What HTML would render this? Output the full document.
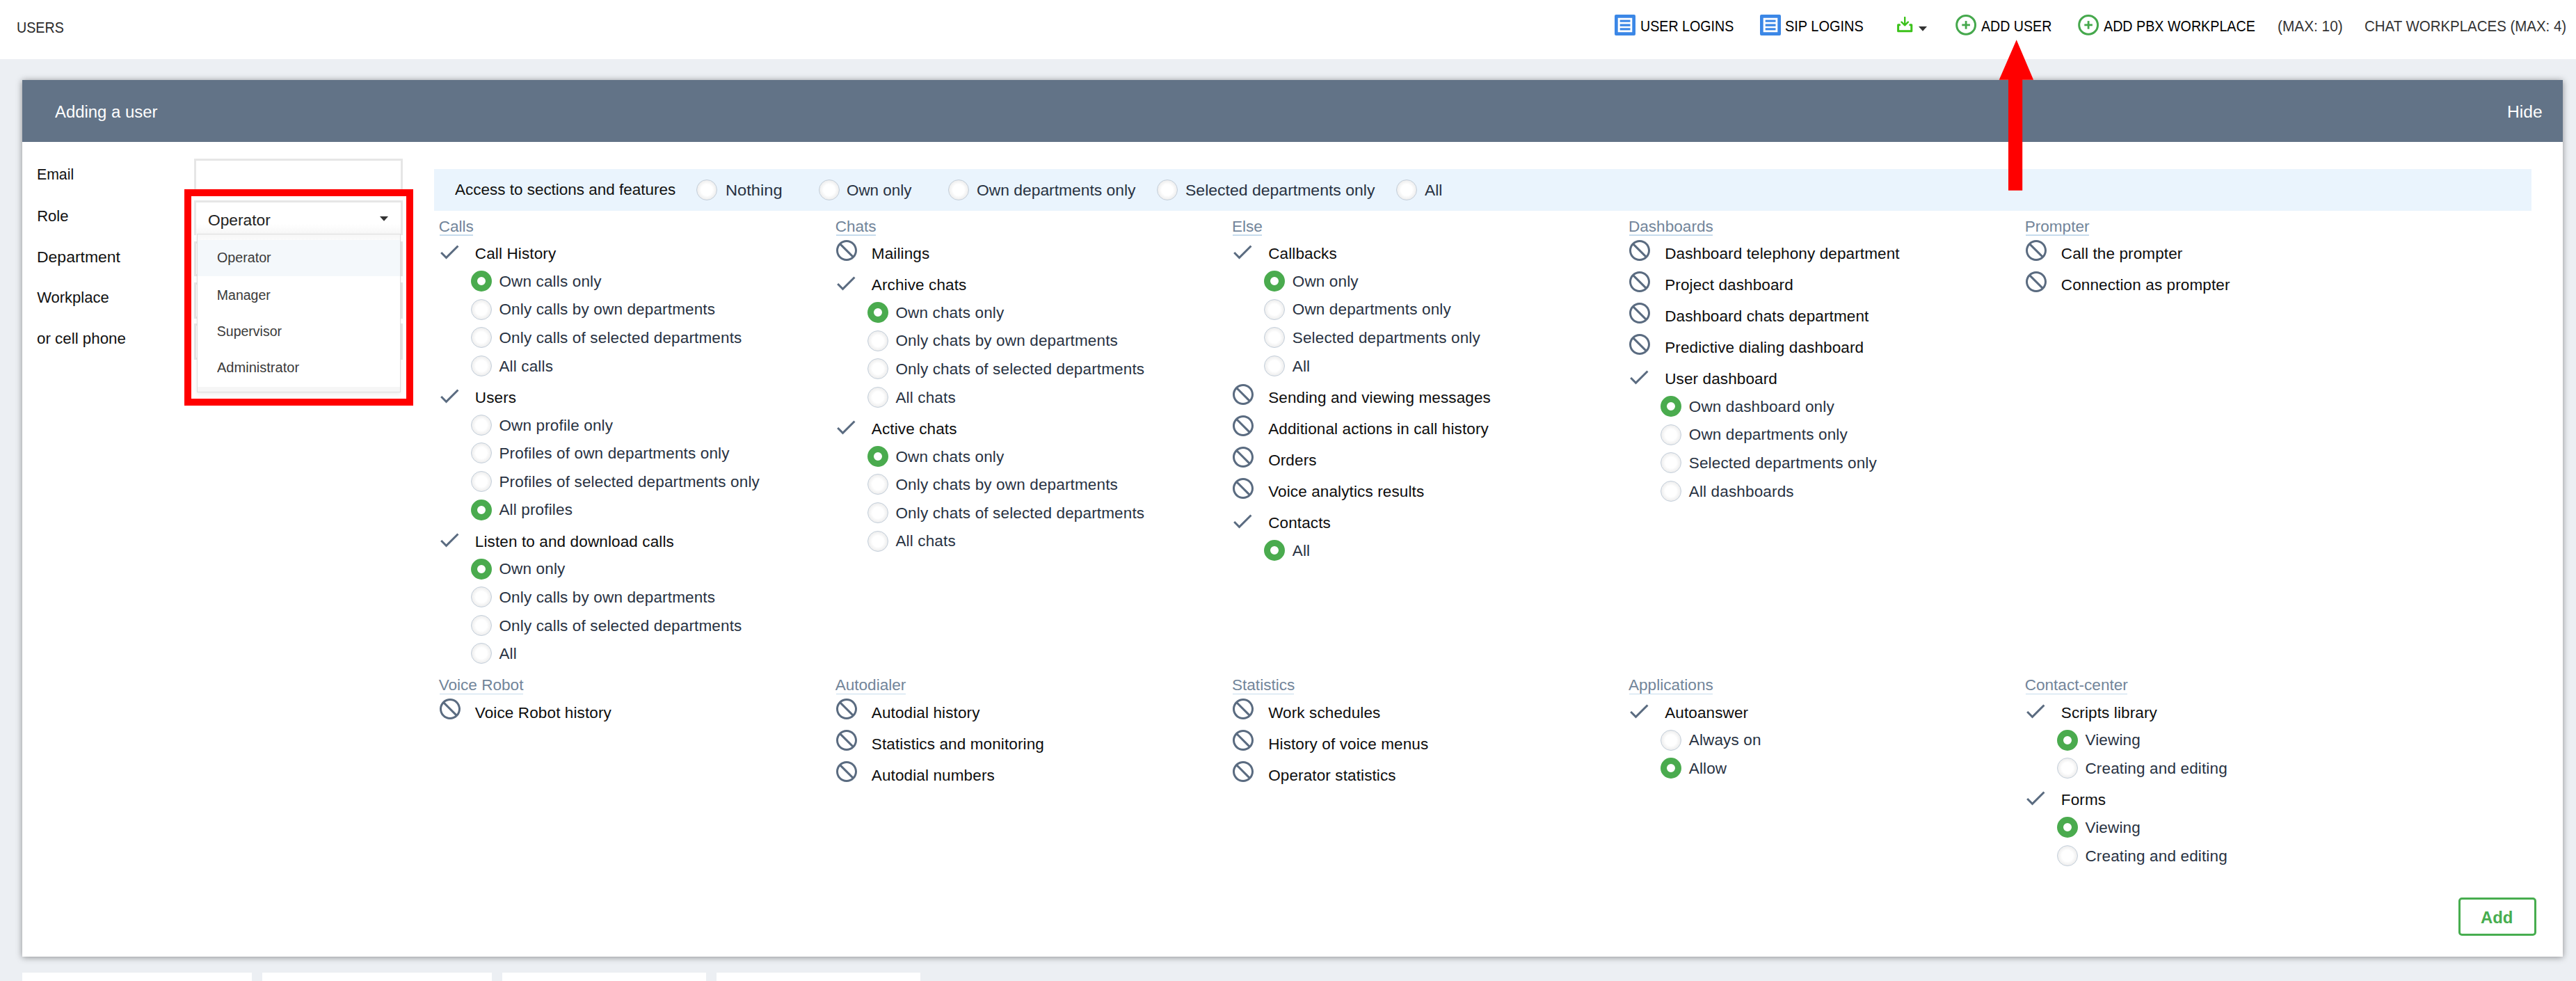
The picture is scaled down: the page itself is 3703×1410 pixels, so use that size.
<!DOCTYPE html><html><head><meta charset="utf-8"><title>Users</title><style>html,body{margin:0;padding:0;width:3703px;height:1410px;overflow:hidden;background:#eceff3;font-family:"Liberation Sans", sans-serif}.t{position:absolute;white-space:pre;transform-origin:0 0}</style></head><body>
<div style="position:absolute;left:0px;top:0px;width:3703px;height:85px;background:#fff"></div>
<div class="t" style="left:23.69px;top:28.80px;font-size:21.8px;line-height:21.8px;color:#2b2b2b;font-weight:400;transform:scaleX(0.9022);">USERS</div>
<svg style="position:absolute;left:2321px;top:21px" width="30" height="30" viewBox="0 0 30 30"><path fill-rule="evenodd" fill="#3b87e6" d="M2 0H28Q30 0 30 2V28Q30 30 28 30H2Q0 30 0 28V2Q0 0 2 0ZM4.7 4.7V25.3H25.3V4.7Z"/><rect x="7.7" y="7.6" width="14.8" height="3.1" fill="#3b87e6"/><rect x="7.7" y="13.5" width="14.8" height="3.3" fill="#3b87e6"/><rect x="7.7" y="19.3" width="14.8" height="3.1" fill="#3b87e6"/></svg>
<div class="t" style="left:2357.69px;top:26.80px;font-size:21.8px;line-height:21.8px;color:#000;font-weight:400;transform:scaleX(0.9012);">USER LOGINS</div>
<svg style="position:absolute;left:2530px;top:21px" width="30" height="30" viewBox="0 0 30 30"><path fill-rule="evenodd" fill="#3b87e6" d="M2 0H28Q30 0 30 2V28Q30 30 28 30H2Q0 30 0 28V2Q0 0 2 0ZM4.7 4.7V25.3H25.3V4.7Z"/><rect x="7.7" y="7.6" width="14.8" height="3.1" fill="#3b87e6"/><rect x="7.7" y="13.5" width="14.8" height="3.3" fill="#3b87e6"/><rect x="7.7" y="19.3" width="14.8" height="3.1" fill="#3b87e6"/></svg>
<div class="t" style="left:2566.09px;top:26.80px;font-size:21.8px;line-height:21.8px;color:#000;font-weight:400;transform:scaleX(0.9149);">SIP LOGINS</div>
<svg style="position:absolute;left:2726px;top:24px" width="24" height="23" viewBox="0 0 24 23"><path d="M4.6 11.7 H2.6 V20.8 H21.8 V11.7 H19.8" fill="none" stroke="#3cc21b" stroke-width="3" stroke-linejoin="round" stroke-linecap="round"/><path d="M12.2 1 V12.2 M7.5 7.7 L12.2 12.4 L16.9 7.7" fill="none" stroke="#3cc21b" stroke-width="2.4" stroke-linecap="round" stroke-linejoin="round"/></svg>
<svg style="position:absolute;left:2758px;top:37.5px" width="12" height="7" viewBox="0 0 12 7"><path d="M0 0 H12 L6 6.8 Z" fill="#333"/></svg>
<svg style="position:absolute;left:2811px;top:21px" width="30" height="30" viewBox="0 0 30 30"><circle cx="15.1" cy="14.9" r="13.4" fill="none" stroke="#45a84c" stroke-width="3"/><rect x="9.3" y="13.5" width="11.6" height="2.8" fill="#45a84c"/><rect x="13.7" y="9.1" width="2.8" height="11.6" fill="#45a84c"/></svg>
<div class="t" style="left:2847.69px;top:26.80px;font-size:21.8px;line-height:21.8px;color:#000;font-weight:400;transform:scaleX(0.8999);">ADD USER</div>
<svg style="position:absolute;left:2987px;top:21px" width="30" height="30" viewBox="0 0 30 30"><circle cx="15.1" cy="14.9" r="13.4" fill="none" stroke="#45a84c" stroke-width="3"/><rect x="9.3" y="13.5" width="11.6" height="2.8" fill="#45a84c"/><rect x="13.7" y="9.1" width="2.8" height="11.6" fill="#45a84c"/></svg>
<div class="t" style="left:3024.29px;top:26.80px;font-size:21.8px;line-height:21.8px;color:#000;font-weight:400;transform:scaleX(0.9039);">ADD PBX WORKPLACE</div>
<div class="t" style="left:3274.29px;top:26.80px;font-size:21.8px;line-height:21.8px;color:#333;font-weight:400;transform:scaleX(0.9549);">(MAX: 10)</div>
<div class="t" style="left:3398.69px;top:26.80px;font-size:21.8px;line-height:21.8px;color:#333;font-weight:400;transform:scaleX(0.9382);">CHAT WORKPLACES (MAX: 4)</div>
<div style="position:absolute;left:32px;top:115px;width:3652px;height:1260px;background:#fff;box-shadow:0 1px 9px rgba(0,0,0,0.42)"></div>
<div style="position:absolute;left:32px;top:115px;width:3652px;height:89px;background:#627387"></div>
<div class="t" style="left:78.62px;top:149.90px;font-size:23px;line-height:23px;color:#fff;font-weight:400;transform:scaleX(1.0384);">Adding a user</div>
<div class="t" style="left:3603.62px;top:149.70px;font-size:23px;line-height:23px;color:#fff;font-weight:400;transform:scaleX(1.0708);">Hide</div>
<div style="position:absolute;left:32px;top:1398px;width:330px;height:12px;background:#fff"></div>
<div style="position:absolute;left:377px;top:1398px;width:330px;height:12px;background:#fff"></div>
<div style="position:absolute;left:722px;top:1398px;width:293px;height:12px;background:#fff"></div>
<div style="position:absolute;left:1030px;top:1398px;width:293px;height:12px;background:#fff"></div>
<div class="t" style="left:53.18px;top:239.93px;font-size:22px;line-height:22px;color:#111;font-weight:400;transform:scaleX(0.9656);">Email</div>
<div class="t" style="left:53.18px;top:299.63px;font-size:22px;line-height:22px;color:#111;font-weight:400;">Role</div>
<div class="t" style="left:53.18px;top:359.23px;font-size:22px;line-height:22px;color:#111;font-weight:400;transform:scaleX(1.0439);">Department</div>
<div class="t" style="left:53.18px;top:417.33px;font-size:22px;line-height:22px;color:#111;font-weight:400;">Workplace</div>
<div class="t" style="left:53.18px;top:476.33px;font-size:22px;line-height:22px;color:#111;font-weight:400;transform:scaleX(1.0155);">or cell phone</div>
<div style="position:absolute;left:279px;top:228px;width:300px;height:50px;border:3px solid #e6e6e6;box-sizing:border-box;background:#fff"></div>
<div style="position:absolute;left:279px;top:347px;width:300px;height:50px;border:3px solid #e6e6e6;box-sizing:border-box;background:#fff"></div>
<div style="position:absolute;left:279px;top:406px;width:300px;height:52px;border:3px solid #e6e6e6;box-sizing:border-box;background:#fff"></div>
<div style="position:absolute;left:279px;top:465px;width:300px;height:52px;border:3px solid #e6e6e6;box-sizing:border-box;background:#fff"></div>
<div style="position:absolute;left:279px;top:288px;width:300px;height:50px;border:3px solid #e6e6e6;border-bottom:none;box-sizing:border-box;background:#fff"></div>
<div style="position:absolute;left:282px;top:322px;width:294px;height:15px;background:linear-gradient(#fff,#f6f6f6)"></div>
<div class="t" style="left:299.17px;top:305.56px;font-size:22.2px;line-height:22.2px;color:#222;font-weight:400;transform:scaleX(1.0253);">Operator</div>
<svg style="position:absolute;left:546px;top:310.5px" width="12" height="7" viewBox="0 0 12 7"><path d="M0 0 H12 L6 6.8 Z" fill="#333"/></svg>
<div style="position:absolute;left:282.5px;top:336px;width:293.5px;height:228px;background:#fff;border:1px solid #dedede;box-sizing:border-box;box-shadow:0 3px 6px rgba(0,0,0,0.07)"></div>
<div style="position:absolute;left:283.5px;top:556px;width:291.5px;height:7px;background:#f6f6f6"></div>
<div style="position:absolute;left:283.5px;top:337px;width:291.5px;height:8px;background:linear-gradient(#f6f6f6,#fbfbfb)"></div>
<div style="position:absolute;left:283.5px;top:345px;width:291.5px;height:52px;background:#f4f8fb"></div>
<div class="t" style="left:311.83px;top:361.41px;font-size:19.5px;line-height:19.5px;color:#3a3a3a;font-weight:400;transform:scaleX(1.0093);">Operator</div>
<div class="t" style="left:311.83px;top:414.81px;font-size:19.5px;line-height:19.5px;color:#3a3a3a;font-weight:400;">Manager</div>
<div class="t" style="left:311.83px;top:466.61px;font-size:19.5px;line-height:19.5px;color:#3a3a3a;font-weight:400;">Supervisor</div>
<div class="t" style="left:311.83px;top:518.81px;font-size:19.5px;line-height:19.5px;color:#3a3a3a;font-weight:400;transform:scaleX(1.0281);">Administrator</div>
<div style="position:absolute;left:265px;top:272px;width:329px;height:311px;border:10px solid #ff0000;box-sizing:border-box"></div>
<div style="position:absolute;left:624px;top:243px;width:3015px;height:60px;background:#eaf4fd"></div>
<div class="t" style="left:653.65px;top:261.81px;font-size:22.5px;line-height:22.5px;color:#111;font-weight:400;transform:scaleX(0.9987);">Access to sections and features</div>
<svg style="position:absolute;left:1001.2px;top:258.2px" width="30" height="30" viewBox="0 0 30 30"><defs><radialGradient id="rg" cx="50%" cy="50%" r="50%"><stop offset="0.55" stop-color="#fff"/><stop offset="1" stop-color="#ececec"/></radialGradient></defs><circle cx="15" cy="15" r="14.5" fill="url(#rg)" stroke="#c3ceda" stroke-width="1"/></svg>
<div class="t" style="left:1042.65px;top:263.11px;font-size:22.5px;line-height:22.5px;color:#283242;font-weight:400;transform:scaleX(1.0516);">Nothing</div>
<svg style="position:absolute;left:1177.4px;top:258.2px" width="30" height="30" viewBox="0 0 30 30"><defs><radialGradient id="rg" cx="50%" cy="50%" r="50%"><stop offset="0.55" stop-color="#fff"/><stop offset="1" stop-color="#ececec"/></radialGradient></defs><circle cx="15" cy="15" r="14.5" fill="url(#rg)" stroke="#c3ceda" stroke-width="1"/></svg>
<div class="t" style="left:1217.35px;top:263.11px;font-size:22.5px;line-height:22.5px;color:#283242;font-weight:400;transform:scaleX(0.9962);">Own only</div>
<svg style="position:absolute;left:1363.2px;top:258.2px" width="30" height="30" viewBox="0 0 30 30"><defs><radialGradient id="rg" cx="50%" cy="50%" r="50%"><stop offset="0.55" stop-color="#fff"/><stop offset="1" stop-color="#ececec"/></radialGradient></defs><circle cx="15" cy="15" r="14.5" fill="url(#rg)" stroke="#c3ceda" stroke-width="1"/></svg>
<div class="t" style="left:1404.25px;top:263.11px;font-size:22.5px;line-height:22.5px;color:#283242;font-weight:400;transform:scaleX(1.0149);">Own departments only</div>
<svg style="position:absolute;left:1663.2px;top:258.2px" width="30" height="30" viewBox="0 0 30 30"><defs><radialGradient id="rg" cx="50%" cy="50%" r="50%"><stop offset="0.55" stop-color="#fff"/><stop offset="1" stop-color="#ececec"/></radialGradient></defs><circle cx="15" cy="15" r="14.5" fill="url(#rg)" stroke="#c3ceda" stroke-width="1"/></svg>
<div class="t" style="left:1704.15px;top:263.11px;font-size:22.5px;line-height:22.5px;color:#283242;font-weight:400;transform:scaleX(1.0228);">Selected departments only</div>
<svg style="position:absolute;left:2007px;top:258.2px" width="30" height="30" viewBox="0 0 30 30"><defs><radialGradient id="rg" cx="50%" cy="50%" r="50%"><stop offset="0.55" stop-color="#fff"/><stop offset="1" stop-color="#ececec"/></radialGradient></defs><circle cx="15" cy="15" r="14.5" fill="url(#rg)" stroke="#c3ceda" stroke-width="1"/></svg>
<div class="t" style="left:2048.05px;top:263.11px;font-size:22.5px;line-height:22.5px;color:#283242;font-weight:400;transform:scaleX(1.0103);">All</div>
<div class="t" style="left:630.64px;top:314.93px;font-size:22.6px;line-height:22.6px;color:#72859a;font-weight:400;">Calls</div><div style="position:absolute;left:632.0px;top:337.3px;width:48.0px;height:1.3px;background:#c6dbec"></div>
<svg style="position:absolute;left:628px;top:344px" width="36" height="36" viewBox="0 0 24 24"><path d="M9 16.17L4.83 12l-1.42 1.41L9 19 21 7l-1.41-1.41z" fill="#5a6b80"/></svg>
<div class="t" style="left:682.85px;top:354.01px;font-size:22.5px;line-height:22.5px;color:#0d0d0d;font-weight:400;letter-spacing:0.12px;">Call History</div>
<svg style="position:absolute;left:677px;top:389px" width="30" height="30" viewBox="0 0 30 30"><circle cx="15" cy="15" r="10.5" fill="none" stroke="#4aab4e" stroke-width="9"/></svg>
<div class="t" style="left:717.45px;top:393.81px;font-size:22.5px;line-height:22.5px;color:#283242;font-weight:400;letter-spacing:0.15px;">Own calls only</div>
<svg style="position:absolute;left:677px;top:429.6px" width="30" height="30" viewBox="0 0 30 30"><defs><radialGradient id="rg" cx="50%" cy="50%" r="50%"><stop offset="0.55" stop-color="#fff"/><stop offset="1" stop-color="#ececec"/></radialGradient></defs><circle cx="15" cy="15" r="14.5" fill="url(#rg)" stroke="#c3ceda" stroke-width="1"/></svg>
<div class="t" style="left:717.45px;top:434.41px;font-size:22.5px;line-height:22.5px;color:#283242;font-weight:400;letter-spacing:0.15px;">Only calls by own departments</div>
<svg style="position:absolute;left:677px;top:470.20000000000005px" width="30" height="30" viewBox="0 0 30 30"><defs><radialGradient id="rg" cx="50%" cy="50%" r="50%"><stop offset="0.55" stop-color="#fff"/><stop offset="1" stop-color="#ececec"/></radialGradient></defs><circle cx="15" cy="15" r="14.5" fill="url(#rg)" stroke="#c3ceda" stroke-width="1"/></svg>
<div class="t" style="left:717.45px;top:475.01px;font-size:22.5px;line-height:22.5px;color:#283242;font-weight:400;letter-spacing:0.15px;">Only calls of selected departments</div>
<svg style="position:absolute;left:677px;top:510.80000000000007px" width="30" height="30" viewBox="0 0 30 30"><defs><radialGradient id="rg" cx="50%" cy="50%" r="50%"><stop offset="0.55" stop-color="#fff"/><stop offset="1" stop-color="#ececec"/></radialGradient></defs><circle cx="15" cy="15" r="14.5" fill="url(#rg)" stroke="#c3ceda" stroke-width="1"/></svg>
<div class="t" style="left:717.45px;top:515.61px;font-size:22.5px;line-height:22.5px;color:#283242;font-weight:400;letter-spacing:0.15px;">All calls</div>
<svg style="position:absolute;left:628px;top:550.8000000000001px" width="36" height="36" viewBox="0 0 24 24"><path d="M9 16.17L4.83 12l-1.42 1.41L9 19 21 7l-1.41-1.41z" fill="#5a6b80"/></svg>
<div class="t" style="left:682.85px;top:560.81px;font-size:22.5px;line-height:22.5px;color:#0d0d0d;font-weight:400;letter-spacing:0.12px;">Users</div>
<svg style="position:absolute;left:677px;top:595.8000000000001px" width="30" height="30" viewBox="0 0 30 30"><defs><radialGradient id="rg" cx="50%" cy="50%" r="50%"><stop offset="0.55" stop-color="#fff"/><stop offset="1" stop-color="#ececec"/></radialGradient></defs><circle cx="15" cy="15" r="14.5" fill="url(#rg)" stroke="#c3ceda" stroke-width="1"/></svg>
<div class="t" style="left:717.45px;top:600.61px;font-size:22.5px;line-height:22.5px;color:#283242;font-weight:400;letter-spacing:0.15px;">Own profile only</div>
<svg style="position:absolute;left:677px;top:636.4000000000001px" width="30" height="30" viewBox="0 0 30 30"><defs><radialGradient id="rg" cx="50%" cy="50%" r="50%"><stop offset="0.55" stop-color="#fff"/><stop offset="1" stop-color="#ececec"/></radialGradient></defs><circle cx="15" cy="15" r="14.5" fill="url(#rg)" stroke="#c3ceda" stroke-width="1"/></svg>
<div class="t" style="left:717.45px;top:641.21px;font-size:22.5px;line-height:22.5px;color:#283242;font-weight:400;letter-spacing:0.15px;">Profiles of own departments only</div>
<svg style="position:absolute;left:677px;top:677.0000000000001px" width="30" height="30" viewBox="0 0 30 30"><defs><radialGradient id="rg" cx="50%" cy="50%" r="50%"><stop offset="0.55" stop-color="#fff"/><stop offset="1" stop-color="#ececec"/></radialGradient></defs><circle cx="15" cy="15" r="14.5" fill="url(#rg)" stroke="#c3ceda" stroke-width="1"/></svg>
<div class="t" style="left:717.45px;top:681.81px;font-size:22.5px;line-height:22.5px;color:#283242;font-weight:400;letter-spacing:0.15px;">Profiles of selected departments only</div>
<svg style="position:absolute;left:677px;top:717.6000000000001px" width="30" height="30" viewBox="0 0 30 30"><circle cx="15" cy="15" r="10.5" fill="none" stroke="#4aab4e" stroke-width="9"/></svg>
<div class="t" style="left:717.45px;top:722.41px;font-size:22.5px;line-height:22.5px;color:#283242;font-weight:400;letter-spacing:0.15px;">All profiles</div>
<svg style="position:absolute;left:628px;top:757.6000000000001px" width="36" height="36" viewBox="0 0 24 24"><path d="M9 16.17L4.83 12l-1.42 1.41L9 19 21 7l-1.41-1.41z" fill="#5a6b80"/></svg>
<div class="t" style="left:682.85px;top:767.61px;font-size:22.5px;line-height:22.5px;color:#0d0d0d;font-weight:400;letter-spacing:0.12px;">Listen to and download calls</div>
<svg style="position:absolute;left:677px;top:802.6000000000001px" width="30" height="30" viewBox="0 0 30 30"><circle cx="15" cy="15" r="10.5" fill="none" stroke="#4aab4e" stroke-width="9"/></svg>
<div class="t" style="left:717.45px;top:807.41px;font-size:22.5px;line-height:22.5px;color:#283242;font-weight:400;letter-spacing:0.15px;">Own only</div>
<svg style="position:absolute;left:677px;top:843.2000000000002px" width="30" height="30" viewBox="0 0 30 30"><defs><radialGradient id="rg" cx="50%" cy="50%" r="50%"><stop offset="0.55" stop-color="#fff"/><stop offset="1" stop-color="#ececec"/></radialGradient></defs><circle cx="15" cy="15" r="14.5" fill="url(#rg)" stroke="#c3ceda" stroke-width="1"/></svg>
<div class="t" style="left:717.45px;top:848.01px;font-size:22.5px;line-height:22.5px;color:#283242;font-weight:400;letter-spacing:0.15px;">Only calls by own departments</div>
<svg style="position:absolute;left:677px;top:883.8000000000002px" width="30" height="30" viewBox="0 0 30 30"><defs><radialGradient id="rg" cx="50%" cy="50%" r="50%"><stop offset="0.55" stop-color="#fff"/><stop offset="1" stop-color="#ececec"/></radialGradient></defs><circle cx="15" cy="15" r="14.5" fill="url(#rg)" stroke="#c3ceda" stroke-width="1"/></svg>
<div class="t" style="left:717.45px;top:888.61px;font-size:22.5px;line-height:22.5px;color:#283242;font-weight:400;letter-spacing:0.15px;">Only calls of selected departments</div>
<svg style="position:absolute;left:677px;top:924.4000000000002px" width="30" height="30" viewBox="0 0 30 30"><defs><radialGradient id="rg" cx="50%" cy="50%" r="50%"><stop offset="0.55" stop-color="#fff"/><stop offset="1" stop-color="#ececec"/></radialGradient></defs><circle cx="15" cy="15" r="14.5" fill="url(#rg)" stroke="#c3ceda" stroke-width="1"/></svg>
<div class="t" style="left:717.45px;top:929.21px;font-size:22.5px;line-height:22.5px;color:#283242;font-weight:400;letter-spacing:0.15px;">All</div>
<div class="t" style="left:1200.64px;top:314.93px;font-size:22.6px;line-height:22.6px;color:#72859a;font-weight:400;">Chats</div><div style="position:absolute;left:1202.0px;top:337.3px;width:56.8px;height:1.3px;background:#c6dbec"></div>
<svg style="position:absolute;left:1199px;top:341.7px" width="36" height="36" viewBox="0 0 24 24"><path transform="matrix(-1 0 0 1 24 0)" d="M12 2C6.48 2 2 6.48 2 12s4.48 10 10 10 10-4.48 10-10S17.52 2 12 2zM4 12c0-4.42 3.58-8 8-8 1.85 0 3.55.63 4.9 1.69L5.69 16.9C4.63 15.55 4 13.85 4 12zm8 8c-1.85 0-3.55-.63-4.9-1.69L18.31 7.1C19.37 8.45 20 10.15 20 12c0 4.42-3.58 8-8 8z" fill="#5a6b80"/></svg>
<div class="t" style="left:1252.85px;top:354.01px;font-size:22.5px;line-height:22.5px;color:#0d0d0d;font-weight:400;letter-spacing:0.12px;">Mailings</div>
<svg style="position:absolute;left:1198px;top:389px" width="36" height="36" viewBox="0 0 24 24"><path d="M9 16.17L4.83 12l-1.42 1.41L9 19 21 7l-1.41-1.41z" fill="#5a6b80"/></svg>
<div class="t" style="left:1252.85px;top:399.01px;font-size:22.5px;line-height:22.5px;color:#0d0d0d;font-weight:400;letter-spacing:0.12px;">Archive chats</div>
<svg style="position:absolute;left:1247px;top:434px" width="30" height="30" viewBox="0 0 30 30"><circle cx="15" cy="15" r="10.5" fill="none" stroke="#4aab4e" stroke-width="9"/></svg>
<div class="t" style="left:1287.45px;top:438.81px;font-size:22.5px;line-height:22.5px;color:#283242;font-weight:400;letter-spacing:0.15px;">Own chats only</div>
<svg style="position:absolute;left:1247px;top:474.6px" width="30" height="30" viewBox="0 0 30 30"><defs><radialGradient id="rg" cx="50%" cy="50%" r="50%"><stop offset="0.55" stop-color="#fff"/><stop offset="1" stop-color="#ececec"/></radialGradient></defs><circle cx="15" cy="15" r="14.5" fill="url(#rg)" stroke="#c3ceda" stroke-width="1"/></svg>
<div class="t" style="left:1287.45px;top:479.41px;font-size:22.5px;line-height:22.5px;color:#283242;font-weight:400;letter-spacing:0.15px;">Only chats by own departments</div>
<svg style="position:absolute;left:1247px;top:515.2px" width="30" height="30" viewBox="0 0 30 30"><defs><radialGradient id="rg" cx="50%" cy="50%" r="50%"><stop offset="0.55" stop-color="#fff"/><stop offset="1" stop-color="#ececec"/></radialGradient></defs><circle cx="15" cy="15" r="14.5" fill="url(#rg)" stroke="#c3ceda" stroke-width="1"/></svg>
<div class="t" style="left:1287.45px;top:520.01px;font-size:22.5px;line-height:22.5px;color:#283242;font-weight:400;letter-spacing:0.15px;">Only chats of selected departments</div>
<svg style="position:absolute;left:1247px;top:555.8000000000001px" width="30" height="30" viewBox="0 0 30 30"><defs><radialGradient id="rg" cx="50%" cy="50%" r="50%"><stop offset="0.55" stop-color="#fff"/><stop offset="1" stop-color="#ececec"/></radialGradient></defs><circle cx="15" cy="15" r="14.5" fill="url(#rg)" stroke="#c3ceda" stroke-width="1"/></svg>
<div class="t" style="left:1287.45px;top:560.61px;font-size:22.5px;line-height:22.5px;color:#283242;font-weight:400;letter-spacing:0.15px;">All chats</div>
<svg style="position:absolute;left:1198px;top:595.8000000000001px" width="36" height="36" viewBox="0 0 24 24"><path d="M9 16.17L4.83 12l-1.42 1.41L9 19 21 7l-1.41-1.41z" fill="#5a6b80"/></svg>
<div class="t" style="left:1252.85px;top:605.81px;font-size:22.5px;line-height:22.5px;color:#0d0d0d;font-weight:400;letter-spacing:0.12px;">Active chats</div>
<svg style="position:absolute;left:1247px;top:640.8000000000001px" width="30" height="30" viewBox="0 0 30 30"><circle cx="15" cy="15" r="10.5" fill="none" stroke="#4aab4e" stroke-width="9"/></svg>
<div class="t" style="left:1287.45px;top:645.61px;font-size:22.5px;line-height:22.5px;color:#283242;font-weight:400;letter-spacing:0.15px;">Own chats only</div>
<svg style="position:absolute;left:1247px;top:681.4000000000001px" width="30" height="30" viewBox="0 0 30 30"><defs><radialGradient id="rg" cx="50%" cy="50%" r="50%"><stop offset="0.55" stop-color="#fff"/><stop offset="1" stop-color="#ececec"/></radialGradient></defs><circle cx="15" cy="15" r="14.5" fill="url(#rg)" stroke="#c3ceda" stroke-width="1"/></svg>
<div class="t" style="left:1287.45px;top:686.21px;font-size:22.5px;line-height:22.5px;color:#283242;font-weight:400;letter-spacing:0.15px;">Only chats by own departments</div>
<svg style="position:absolute;left:1247px;top:722.0000000000001px" width="30" height="30" viewBox="0 0 30 30"><defs><radialGradient id="rg" cx="50%" cy="50%" r="50%"><stop offset="0.55" stop-color="#fff"/><stop offset="1" stop-color="#ececec"/></radialGradient></defs><circle cx="15" cy="15" r="14.5" fill="url(#rg)" stroke="#c3ceda" stroke-width="1"/></svg>
<div class="t" style="left:1287.45px;top:726.81px;font-size:22.5px;line-height:22.5px;color:#283242;font-weight:400;letter-spacing:0.15px;">Only chats of selected departments</div>
<svg style="position:absolute;left:1247px;top:762.6000000000001px" width="30" height="30" viewBox="0 0 30 30"><defs><radialGradient id="rg" cx="50%" cy="50%" r="50%"><stop offset="0.55" stop-color="#fff"/><stop offset="1" stop-color="#ececec"/></radialGradient></defs><circle cx="15" cy="15" r="14.5" fill="url(#rg)" stroke="#c3ceda" stroke-width="1"/></svg>
<div class="t" style="left:1287.45px;top:767.41px;font-size:22.5px;line-height:22.5px;color:#283242;font-weight:400;letter-spacing:0.15px;">All chats</div>
<div class="t" style="left:1770.94px;top:314.93px;font-size:22.6px;line-height:22.6px;color:#72859a;font-weight:400;">Else</div><div style="position:absolute;left:1772.3px;top:337.3px;width:41.7px;height:1.3px;background:#c6dbec"></div>
<svg style="position:absolute;left:1768.3px;top:344px" width="36" height="36" viewBox="0 0 24 24"><path d="M9 16.17L4.83 12l-1.42 1.41L9 19 21 7l-1.41-1.41z" fill="#5a6b80"/></svg>
<div class="t" style="left:1823.15px;top:354.01px;font-size:22.5px;line-height:22.5px;color:#0d0d0d;font-weight:400;letter-spacing:0.12px;">Callbacks</div>
<svg style="position:absolute;left:1817.3px;top:389px" width="30" height="30" viewBox="0 0 30 30"><circle cx="15" cy="15" r="10.5" fill="none" stroke="#4aab4e" stroke-width="9"/></svg>
<div class="t" style="left:1857.75px;top:393.81px;font-size:22.5px;line-height:22.5px;color:#283242;font-weight:400;letter-spacing:0.15px;">Own only</div>
<svg style="position:absolute;left:1817.3px;top:429.6px" width="30" height="30" viewBox="0 0 30 30"><defs><radialGradient id="rg" cx="50%" cy="50%" r="50%"><stop offset="0.55" stop-color="#fff"/><stop offset="1" stop-color="#ececec"/></radialGradient></defs><circle cx="15" cy="15" r="14.5" fill="url(#rg)" stroke="#c3ceda" stroke-width="1"/></svg>
<div class="t" style="left:1857.75px;top:434.41px;font-size:22.5px;line-height:22.5px;color:#283242;font-weight:400;letter-spacing:0.15px;">Own departments only</div>
<svg style="position:absolute;left:1817.3px;top:470.20000000000005px" width="30" height="30" viewBox="0 0 30 30"><defs><radialGradient id="rg" cx="50%" cy="50%" r="50%"><stop offset="0.55" stop-color="#fff"/><stop offset="1" stop-color="#ececec"/></radialGradient></defs><circle cx="15" cy="15" r="14.5" fill="url(#rg)" stroke="#c3ceda" stroke-width="1"/></svg>
<div class="t" style="left:1857.75px;top:475.01px;font-size:22.5px;line-height:22.5px;color:#283242;font-weight:400;letter-spacing:0.15px;">Selected departments only</div>
<svg style="position:absolute;left:1817.3px;top:510.80000000000007px" width="30" height="30" viewBox="0 0 30 30"><defs><radialGradient id="rg" cx="50%" cy="50%" r="50%"><stop offset="0.55" stop-color="#fff"/><stop offset="1" stop-color="#ececec"/></radialGradient></defs><circle cx="15" cy="15" r="14.5" fill="url(#rg)" stroke="#c3ceda" stroke-width="1"/></svg>
<div class="t" style="left:1857.75px;top:515.61px;font-size:22.5px;line-height:22.5px;color:#283242;font-weight:400;letter-spacing:0.15px;">All</div>
<svg style="position:absolute;left:1769.3px;top:548.5000000000001px" width="36" height="36" viewBox="0 0 24 24"><path transform="matrix(-1 0 0 1 24 0)" d="M12 2C6.48 2 2 6.48 2 12s4.48 10 10 10 10-4.48 10-10S17.52 2 12 2zM4 12c0-4.42 3.58-8 8-8 1.85 0 3.55.63 4.9 1.69L5.69 16.9C4.63 15.55 4 13.85 4 12zm8 8c-1.85 0-3.55-.63-4.9-1.69L18.31 7.1C19.37 8.45 20 10.15 20 12c0 4.42-3.58 8-8 8z" fill="#5a6b80"/></svg>
<div class="t" style="left:1823.15px;top:560.81px;font-size:22.5px;line-height:22.5px;color:#0d0d0d;font-weight:400;letter-spacing:0.12px;">Sending and viewing messages</div>
<svg style="position:absolute;left:1769.3px;top:593.5000000000001px" width="36" height="36" viewBox="0 0 24 24"><path transform="matrix(-1 0 0 1 24 0)" d="M12 2C6.48 2 2 6.48 2 12s4.48 10 10 10 10-4.48 10-10S17.52 2 12 2zM4 12c0-4.42 3.58-8 8-8 1.85 0 3.55.63 4.9 1.69L5.69 16.9C4.63 15.55 4 13.85 4 12zm8 8c-1.85 0-3.55-.63-4.9-1.69L18.31 7.1C19.37 8.45 20 10.15 20 12c0 4.42-3.58 8-8 8z" fill="#5a6b80"/></svg>
<div class="t" style="left:1823.15px;top:605.81px;font-size:22.5px;line-height:22.5px;color:#0d0d0d;font-weight:400;letter-spacing:0.12px;">Additional actions in call history</div>
<svg style="position:absolute;left:1769.3px;top:638.5000000000001px" width="36" height="36" viewBox="0 0 24 24"><path transform="matrix(-1 0 0 1 24 0)" d="M12 2C6.48 2 2 6.48 2 12s4.48 10 10 10 10-4.48 10-10S17.52 2 12 2zM4 12c0-4.42 3.58-8 8-8 1.85 0 3.55.63 4.9 1.69L5.69 16.9C4.63 15.55 4 13.85 4 12zm8 8c-1.85 0-3.55-.63-4.9-1.69L18.31 7.1C19.37 8.45 20 10.15 20 12c0 4.42-3.58 8-8 8z" fill="#5a6b80"/></svg>
<div class="t" style="left:1823.15px;top:650.81px;font-size:22.5px;line-height:22.5px;color:#0d0d0d;font-weight:400;letter-spacing:0.12px;">Orders</div>
<svg style="position:absolute;left:1769.3px;top:683.5000000000001px" width="36" height="36" viewBox="0 0 24 24"><path transform="matrix(-1 0 0 1 24 0)" d="M12 2C6.48 2 2 6.48 2 12s4.48 10 10 10 10-4.48 10-10S17.52 2 12 2zM4 12c0-4.42 3.58-8 8-8 1.85 0 3.55.63 4.9 1.69L5.69 16.9C4.63 15.55 4 13.85 4 12zm8 8c-1.85 0-3.55-.63-4.9-1.69L18.31 7.1C19.37 8.45 20 10.15 20 12c0 4.42-3.58 8-8 8z" fill="#5a6b80"/></svg>
<div class="t" style="left:1823.15px;top:695.81px;font-size:22.5px;line-height:22.5px;color:#0d0d0d;font-weight:400;letter-spacing:0.12px;">Voice analytics results</div>
<svg style="position:absolute;left:1768.3px;top:730.8000000000001px" width="36" height="36" viewBox="0 0 24 24"><path d="M9 16.17L4.83 12l-1.42 1.41L9 19 21 7l-1.41-1.41z" fill="#5a6b80"/></svg>
<div class="t" style="left:1823.15px;top:740.81px;font-size:22.5px;line-height:22.5px;color:#0d0d0d;font-weight:400;letter-spacing:0.12px;">Contacts</div>
<svg style="position:absolute;left:1817.3px;top:775.8000000000001px" width="30" height="30" viewBox="0 0 30 30"><circle cx="15" cy="15" r="10.5" fill="none" stroke="#4aab4e" stroke-width="9"/></svg>
<div class="t" style="left:1857.75px;top:780.61px;font-size:22.5px;line-height:22.5px;color:#283242;font-weight:400;letter-spacing:0.15px;">All</div>
<div class="t" style="left:2340.94px;top:314.93px;font-size:22.6px;line-height:22.6px;color:#72859a;font-weight:400;">Dashboards</div><div style="position:absolute;left:2342.3px;top:337.3px;width:119.6px;height:1.3px;background:#c6dbec"></div>
<svg style="position:absolute;left:2339.3px;top:341.7px" width="36" height="36" viewBox="0 0 24 24"><path transform="matrix(-1 0 0 1 24 0)" d="M12 2C6.48 2 2 6.48 2 12s4.48 10 10 10 10-4.48 10-10S17.52 2 12 2zM4 12c0-4.42 3.58-8 8-8 1.85 0 3.55.63 4.9 1.69L5.69 16.9C4.63 15.55 4 13.85 4 12zm8 8c-1.85 0-3.55-.63-4.9-1.69L18.31 7.1C19.37 8.45 20 10.15 20 12c0 4.42-3.58 8-8 8z" fill="#5a6b80"/></svg>
<div class="t" style="left:2393.15px;top:354.01px;font-size:22.5px;line-height:22.5px;color:#0d0d0d;font-weight:400;letter-spacing:0.12px;">Dashboard telephony department</div>
<svg style="position:absolute;left:2339.3px;top:386.7px" width="36" height="36" viewBox="0 0 24 24"><path transform="matrix(-1 0 0 1 24 0)" d="M12 2C6.48 2 2 6.48 2 12s4.48 10 10 10 10-4.48 10-10S17.52 2 12 2zM4 12c0-4.42 3.58-8 8-8 1.85 0 3.55.63 4.9 1.69L5.69 16.9C4.63 15.55 4 13.85 4 12zm8 8c-1.85 0-3.55-.63-4.9-1.69L18.31 7.1C19.37 8.45 20 10.15 20 12c0 4.42-3.58 8-8 8z" fill="#5a6b80"/></svg>
<div class="t" style="left:2393.15px;top:399.01px;font-size:22.5px;line-height:22.5px;color:#0d0d0d;font-weight:400;letter-spacing:0.12px;">Project dashboard</div>
<svg style="position:absolute;left:2339.3px;top:431.7px" width="36" height="36" viewBox="0 0 24 24"><path transform="matrix(-1 0 0 1 24 0)" d="M12 2C6.48 2 2 6.48 2 12s4.48 10 10 10 10-4.48 10-10S17.52 2 12 2zM4 12c0-4.42 3.58-8 8-8 1.85 0 3.55.63 4.9 1.69L5.69 16.9C4.63 15.55 4 13.85 4 12zm8 8c-1.85 0-3.55-.63-4.9-1.69L18.31 7.1C19.37 8.45 20 10.15 20 12c0 4.42-3.58 8-8 8z" fill="#5a6b80"/></svg>
<div class="t" style="left:2393.15px;top:444.01px;font-size:22.5px;line-height:22.5px;color:#0d0d0d;font-weight:400;letter-spacing:0.12px;">Dashboard chats department</div>
<svg style="position:absolute;left:2339.3px;top:476.7px" width="36" height="36" viewBox="0 0 24 24"><path transform="matrix(-1 0 0 1 24 0)" d="M12 2C6.48 2 2 6.48 2 12s4.48 10 10 10 10-4.48 10-10S17.52 2 12 2zM4 12c0-4.42 3.58-8 8-8 1.85 0 3.55.63 4.9 1.69L5.69 16.9C4.63 15.55 4 13.85 4 12zm8 8c-1.85 0-3.55-.63-4.9-1.69L18.31 7.1C19.37 8.45 20 10.15 20 12c0 4.42-3.58 8-8 8z" fill="#5a6b80"/></svg>
<div class="t" style="left:2393.15px;top:489.01px;font-size:22.5px;line-height:22.5px;color:#0d0d0d;font-weight:400;letter-spacing:0.12px;">Predictive dialing dashboard</div>
<svg style="position:absolute;left:2338.3px;top:524px" width="36" height="36" viewBox="0 0 24 24"><path d="M9 16.17L4.83 12l-1.42 1.41L9 19 21 7l-1.41-1.41z" fill="#5a6b80"/></svg>
<div class="t" style="left:2393.15px;top:534.01px;font-size:22.5px;line-height:22.5px;color:#0d0d0d;font-weight:400;letter-spacing:0.12px;">User dashboard</div>
<svg style="position:absolute;left:2387.3px;top:569px" width="30" height="30" viewBox="0 0 30 30"><circle cx="15" cy="15" r="10.5" fill="none" stroke="#4aab4e" stroke-width="9"/></svg>
<div class="t" style="left:2427.75px;top:573.81px;font-size:22.5px;line-height:22.5px;color:#283242;font-weight:400;letter-spacing:0.15px;">Own dashboard only</div>
<svg style="position:absolute;left:2387.3px;top:609.6px" width="30" height="30" viewBox="0 0 30 30"><defs><radialGradient id="rg" cx="50%" cy="50%" r="50%"><stop offset="0.55" stop-color="#fff"/><stop offset="1" stop-color="#ececec"/></radialGradient></defs><circle cx="15" cy="15" r="14.5" fill="url(#rg)" stroke="#c3ceda" stroke-width="1"/></svg>
<div class="t" style="left:2427.75px;top:614.41px;font-size:22.5px;line-height:22.5px;color:#283242;font-weight:400;letter-spacing:0.15px;">Own departments only</div>
<svg style="position:absolute;left:2387.3px;top:650.2px" width="30" height="30" viewBox="0 0 30 30"><defs><radialGradient id="rg" cx="50%" cy="50%" r="50%"><stop offset="0.55" stop-color="#fff"/><stop offset="1" stop-color="#ececec"/></radialGradient></defs><circle cx="15" cy="15" r="14.5" fill="url(#rg)" stroke="#c3ceda" stroke-width="1"/></svg>
<div class="t" style="left:2427.75px;top:655.01px;font-size:22.5px;line-height:22.5px;color:#283242;font-weight:400;letter-spacing:0.15px;">Selected departments only</div>
<svg style="position:absolute;left:2387.3px;top:690.8000000000001px" width="30" height="30" viewBox="0 0 30 30"><defs><radialGradient id="rg" cx="50%" cy="50%" r="50%"><stop offset="0.55" stop-color="#fff"/><stop offset="1" stop-color="#ececec"/></radialGradient></defs><circle cx="15" cy="15" r="14.5" fill="url(#rg)" stroke="#c3ceda" stroke-width="1"/></svg>
<div class="t" style="left:2427.75px;top:695.61px;font-size:22.5px;line-height:22.5px;color:#283242;font-weight:400;letter-spacing:0.15px;">All dashboards</div>
<div class="t" style="left:2910.64px;top:314.93px;font-size:22.6px;line-height:22.6px;color:#72859a;font-weight:400;">Prompter</div><div style="position:absolute;left:2912.0px;top:337.3px;width:90.7px;height:1.3px;background:#c6dbec"></div>
<svg style="position:absolute;left:2909px;top:341.7px" width="36" height="36" viewBox="0 0 24 24"><path transform="matrix(-1 0 0 1 24 0)" d="M12 2C6.48 2 2 6.48 2 12s4.48 10 10 10 10-4.48 10-10S17.52 2 12 2zM4 12c0-4.42 3.58-8 8-8 1.85 0 3.55.63 4.9 1.69L5.69 16.9C4.63 15.55 4 13.85 4 12zm8 8c-1.85 0-3.55-.63-4.9-1.69L18.31 7.1C19.37 8.45 20 10.15 20 12c0 4.42-3.58 8-8 8z" fill="#5a6b80"/></svg>
<div class="t" style="left:2962.85px;top:354.01px;font-size:22.5px;line-height:22.5px;color:#0d0d0d;font-weight:400;letter-spacing:0.12px;">Call the prompter</div>
<svg style="position:absolute;left:2909px;top:386.7px" width="36" height="36" viewBox="0 0 24 24"><path transform="matrix(-1 0 0 1 24 0)" d="M12 2C6.48 2 2 6.48 2 12s4.48 10 10 10 10-4.48 10-10S17.52 2 12 2zM4 12c0-4.42 3.58-8 8-8 1.85 0 3.55.63 4.9 1.69L5.69 16.9C4.63 15.55 4 13.85 4 12zm8 8c-1.85 0-3.55-.63-4.9-1.69L18.31 7.1C19.37 8.45 20 10.15 20 12c0 4.42-3.58 8-8 8z" fill="#5a6b80"/></svg>
<div class="t" style="left:2962.85px;top:399.01px;font-size:22.5px;line-height:22.5px;color:#0d0d0d;font-weight:400;letter-spacing:0.12px;">Connection as prompter</div>
<div class="t" style="left:630.64px;top:974.43px;font-size:22.6px;line-height:22.6px;color:#72859a;font-weight:400;">Voice Robot</div><div style="position:absolute;left:632.0px;top:996.8px;width:119.6px;height:1.3px;background:#c6dbec"></div>
<svg style="position:absolute;left:629px;top:1001.2px" width="36" height="36" viewBox="0 0 24 24"><path transform="matrix(-1 0 0 1 24 0)" d="M12 2C6.48 2 2 6.48 2 12s4.48 10 10 10 10-4.48 10-10S17.52 2 12 2zM4 12c0-4.42 3.58-8 8-8 1.85 0 3.55.63 4.9 1.69L5.69 16.9C4.63 15.55 4 13.85 4 12zm8 8c-1.85 0-3.55-.63-4.9-1.69L18.31 7.1C19.37 8.45 20 10.15 20 12c0 4.42-3.58 8-8 8z" fill="#5a6b80"/></svg>
<div class="t" style="left:682.85px;top:1013.51px;font-size:22.5px;line-height:22.5px;color:#0d0d0d;font-weight:400;letter-spacing:0.12px;">Voice Robot history</div>
<div class="t" style="left:1200.64px;top:974.43px;font-size:22.6px;line-height:22.6px;color:#72859a;font-weight:400;">Autodialer</div><div style="position:absolute;left:1202.0px;top:996.8px;width:99.5px;height:1.3px;background:#c6dbec"></div>
<svg style="position:absolute;left:1199px;top:1001.2px" width="36" height="36" viewBox="0 0 24 24"><path transform="matrix(-1 0 0 1 24 0)" d="M12 2C6.48 2 2 6.48 2 12s4.48 10 10 10 10-4.48 10-10S17.52 2 12 2zM4 12c0-4.42 3.58-8 8-8 1.85 0 3.55.63 4.9 1.69L5.69 16.9C4.63 15.55 4 13.85 4 12zm8 8c-1.85 0-3.55-.63-4.9-1.69L18.31 7.1C19.37 8.45 20 10.15 20 12c0 4.42-3.58 8-8 8z" fill="#5a6b80"/></svg>
<div class="t" style="left:1252.85px;top:1013.51px;font-size:22.5px;line-height:22.5px;color:#0d0d0d;font-weight:400;letter-spacing:0.12px;">Autodial history</div>
<svg style="position:absolute;left:1199px;top:1046.2px" width="36" height="36" viewBox="0 0 24 24"><path transform="matrix(-1 0 0 1 24 0)" d="M12 2C6.48 2 2 6.48 2 12s4.48 10 10 10 10-4.48 10-10S17.52 2 12 2zM4 12c0-4.42 3.58-8 8-8 1.85 0 3.55.63 4.9 1.69L5.69 16.9C4.63 15.55 4 13.85 4 12zm8 8c-1.85 0-3.55-.63-4.9-1.69L18.31 7.1C19.37 8.45 20 10.15 20 12c0 4.42-3.58 8-8 8z" fill="#5a6b80"/></svg>
<div class="t" style="left:1252.85px;top:1058.51px;font-size:22.5px;line-height:22.5px;color:#0d0d0d;font-weight:400;letter-spacing:0.12px;">Statistics and monitoring</div>
<svg style="position:absolute;left:1199px;top:1091.2px" width="36" height="36" viewBox="0 0 24 24"><path transform="matrix(-1 0 0 1 24 0)" d="M12 2C6.48 2 2 6.48 2 12s4.48 10 10 10 10-4.48 10-10S17.52 2 12 2zM4 12c0-4.42 3.58-8 8-8 1.85 0 3.55.63 4.9 1.69L5.69 16.9C4.63 15.55 4 13.85 4 12zm8 8c-1.85 0-3.55-.63-4.9-1.69L18.31 7.1C19.37 8.45 20 10.15 20 12c0 4.42-3.58 8-8 8z" fill="#5a6b80"/></svg>
<div class="t" style="left:1252.85px;top:1103.51px;font-size:22.5px;line-height:22.5px;color:#0d0d0d;font-weight:400;letter-spacing:0.12px;">Autodial numbers</div>
<div class="t" style="left:1770.94px;top:974.43px;font-size:22.6px;line-height:22.6px;color:#72859a;font-weight:400;">Statistics</div><div style="position:absolute;left:1772.3px;top:996.8px;width:88.1px;height:1.3px;background:#c6dbec"></div>
<svg style="position:absolute;left:1769.3px;top:1001.2px" width="36" height="36" viewBox="0 0 24 24"><path transform="matrix(-1 0 0 1 24 0)" d="M12 2C6.48 2 2 6.48 2 12s4.48 10 10 10 10-4.48 10-10S17.52 2 12 2zM4 12c0-4.42 3.58-8 8-8 1.85 0 3.55.63 4.9 1.69L5.69 16.9C4.63 15.55 4 13.85 4 12zm8 8c-1.85 0-3.55-.63-4.9-1.69L18.31 7.1C19.37 8.45 20 10.15 20 12c0 4.42-3.58 8-8 8z" fill="#5a6b80"/></svg>
<div class="t" style="left:1823.15px;top:1013.51px;font-size:22.5px;line-height:22.5px;color:#0d0d0d;font-weight:400;letter-spacing:0.12px;">Work schedules</div>
<svg style="position:absolute;left:1769.3px;top:1046.2px" width="36" height="36" viewBox="0 0 24 24"><path transform="matrix(-1 0 0 1 24 0)" d="M12 2C6.48 2 2 6.48 2 12s4.48 10 10 10 10-4.48 10-10S17.52 2 12 2zM4 12c0-4.42 3.58-8 8-8 1.85 0 3.55.63 4.9 1.69L5.69 16.9C4.63 15.55 4 13.85 4 12zm8 8c-1.85 0-3.55-.63-4.9-1.69L18.31 7.1C19.37 8.45 20 10.15 20 12c0 4.42-3.58 8-8 8z" fill="#5a6b80"/></svg>
<div class="t" style="left:1823.15px;top:1058.51px;font-size:22.5px;line-height:22.5px;color:#0d0d0d;font-weight:400;letter-spacing:0.12px;">History of voice menus</div>
<svg style="position:absolute;left:1769.3px;top:1091.2px" width="36" height="36" viewBox="0 0 24 24"><path transform="matrix(-1 0 0 1 24 0)" d="M12 2C6.48 2 2 6.48 2 12s4.48 10 10 10 10-4.48 10-10S17.52 2 12 2zM4 12c0-4.42 3.58-8 8-8 1.85 0 3.55.63 4.9 1.69L5.69 16.9C4.63 15.55 4 13.85 4 12zm8 8c-1.85 0-3.55-.63-4.9-1.69L18.31 7.1C19.37 8.45 20 10.15 20 12c0 4.42-3.58 8-8 8z" fill="#5a6b80"/></svg>
<div class="t" style="left:1823.15px;top:1103.51px;font-size:22.5px;line-height:22.5px;color:#0d0d0d;font-weight:400;letter-spacing:0.12px;">Operator statistics</div>
<div class="t" style="left:2340.94px;top:974.43px;font-size:22.6px;line-height:22.6px;color:#72859a;font-weight:400;">Applications</div><div style="position:absolute;left:2342.3px;top:996.8px;width:119.6px;height:1.3px;background:#c6dbec"></div>
<svg style="position:absolute;left:2338.3px;top:1003.5px" width="36" height="36" viewBox="0 0 24 24"><path d="M9 16.17L4.83 12l-1.42 1.41L9 19 21 7l-1.41-1.41z" fill="#5a6b80"/></svg>
<div class="t" style="left:2393.15px;top:1013.51px;font-size:22.5px;line-height:22.5px;color:#0d0d0d;font-weight:400;letter-spacing:0.12px;">Autoanswer</div>
<svg style="position:absolute;left:2387.3px;top:1048.5px" width="30" height="30" viewBox="0 0 30 30"><defs><radialGradient id="rg" cx="50%" cy="50%" r="50%"><stop offset="0.55" stop-color="#fff"/><stop offset="1" stop-color="#ececec"/></radialGradient></defs><circle cx="15" cy="15" r="14.5" fill="url(#rg)" stroke="#c3ceda" stroke-width="1"/></svg>
<div class="t" style="left:2427.75px;top:1053.31px;font-size:22.5px;line-height:22.5px;color:#283242;font-weight:400;letter-spacing:0.15px;">Always on</div>
<svg style="position:absolute;left:2387.3px;top:1089.1px" width="30" height="30" viewBox="0 0 30 30"><circle cx="15" cy="15" r="10.5" fill="none" stroke="#4aab4e" stroke-width="9"/></svg>
<div class="t" style="left:2427.75px;top:1093.91px;font-size:22.5px;line-height:22.5px;color:#283242;font-weight:400;letter-spacing:0.15px;">Allow</div>
<div class="t" style="left:2910.64px;top:974.43px;font-size:22.6px;line-height:22.6px;color:#72859a;font-weight:400;">Contact-center</div><div style="position:absolute;left:2912.0px;top:996.8px;width:145.9px;height:1.3px;background:#c6dbec"></div>
<svg style="position:absolute;left:2908px;top:1003.5px" width="36" height="36" viewBox="0 0 24 24"><path d="M9 16.17L4.83 12l-1.42 1.41L9 19 21 7l-1.41-1.41z" fill="#5a6b80"/></svg>
<div class="t" style="left:2962.85px;top:1013.51px;font-size:22.5px;line-height:22.5px;color:#0d0d0d;font-weight:400;letter-spacing:0.12px;">Scripts library</div>
<svg style="position:absolute;left:2957px;top:1048.5px" width="30" height="30" viewBox="0 0 30 30"><circle cx="15" cy="15" r="10.5" fill="none" stroke="#4aab4e" stroke-width="9"/></svg>
<div class="t" style="left:2997.45px;top:1053.31px;font-size:22.5px;line-height:22.5px;color:#283242;font-weight:400;letter-spacing:0.15px;">Viewing</div>
<svg style="position:absolute;left:2957px;top:1089.1px" width="30" height="30" viewBox="0 0 30 30"><defs><radialGradient id="rg" cx="50%" cy="50%" r="50%"><stop offset="0.55" stop-color="#fff"/><stop offset="1" stop-color="#ececec"/></radialGradient></defs><circle cx="15" cy="15" r="14.5" fill="url(#rg)" stroke="#c3ceda" stroke-width="1"/></svg>
<div class="t" style="left:2997.45px;top:1093.91px;font-size:22.5px;line-height:22.5px;color:#283242;font-weight:400;letter-spacing:0.15px;">Creating and editing</div>
<svg style="position:absolute;left:2908px;top:1129.1px" width="36" height="36" viewBox="0 0 24 24"><path d="M9 16.17L4.83 12l-1.42 1.41L9 19 21 7l-1.41-1.41z" fill="#5a6b80"/></svg>
<div class="t" style="left:2962.85px;top:1139.11px;font-size:22.5px;line-height:22.5px;color:#0d0d0d;font-weight:400;letter-spacing:0.12px;">Forms</div>
<svg style="position:absolute;left:2957px;top:1174.1px" width="30" height="30" viewBox="0 0 30 30"><circle cx="15" cy="15" r="10.5" fill="none" stroke="#4aab4e" stroke-width="9"/></svg>
<div class="t" style="left:2997.45px;top:1178.91px;font-size:22.5px;line-height:22.5px;color:#283242;font-weight:400;letter-spacing:0.15px;">Viewing</div>
<svg style="position:absolute;left:2957px;top:1214.6999999999998px" width="30" height="30" viewBox="0 0 30 30"><defs><radialGradient id="rg" cx="50%" cy="50%" r="50%"><stop offset="0.55" stop-color="#fff"/><stop offset="1" stop-color="#ececec"/></radialGradient></defs><circle cx="15" cy="15" r="14.5" fill="url(#rg)" stroke="#c3ceda" stroke-width="1"/></svg>
<div class="t" style="left:2997.45px;top:1219.51px;font-size:22.5px;line-height:22.5px;color:#283242;font-weight:400;letter-spacing:0.15px;">Creating and editing</div>
<div style="position:absolute;left:3534px;top:1290px;width:112px;height:55px;border:3px solid #47ad4f;border-radius:5px;box-sizing:border-box"></div>
<div class="t" style="left:3566.39px;top:1307.98px;font-size:23.5px;line-height:23.5px;color:#47ad4f;font-weight:700;transform:scaleX(1.0153);">Add</div>
<svg style="position:absolute;left:2870px;top:55px" width="56" height="220" viewBox="0 0 56 220"><path d="M28.7 2.3 L53.1 59.8 L37.2 59.8 L37.2 218.7 L17 218.7 L17 59.8 L3.7 59.8 Z" fill="#ff0000"/></svg>
</body></html>
